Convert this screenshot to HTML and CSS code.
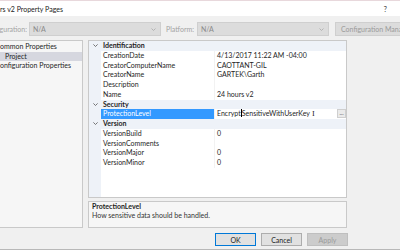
FILE: index.html
```html
<!DOCTYPE html>
<html lang="en">
<head>
  <meta charset="UTF-8">
  <title>Property Pages</title>
  <link rel="stylesheet" href="styles.css">
</head>
<body>
  <div class="window">
    <div class="titlebar">
      <span class="title">rs v2 Property Pages</span>
      <span class="help">?</span>
    </div>

    <div class="config-row">
      <span class="cfg-label"><span>iguration:</span></span>
      <div class="combo">
        <span>N/A</span>
        <svg class="arrow" width="5" height="3" viewBox="0 0 5 3"><polyline points="0.5,0.5 2.5,2.5 4.5,0.5" fill="none" stroke="#a8a8a8" stroke-width="0.8"/></svg>
      </div>
      <span class="cfg-label platform"><span>Platform:</span></span>
      <div class="combo">
        <span>N/A</span>
        <svg class="arrow" width="5" height="3" viewBox="0 0 5 3"><polyline points="0.5,0.5 2.5,2.5 4.5,0.5" fill="none" stroke="#a8a8a8" stroke-width="0.8"/></svg>
      </div>
      <button class="cfg-button">Configuration Manag</button>
    </div>

    <div class="main">
      <div class="tree">
        <div class="tree-item">ommon Properties</div>
        <div class="tree-item selected child">Project</div>
        <div class="tree-item">onfiguration Properties</div>
      </div>

      <div class="right">
        <div class="grid">
          <div class="row category">
            <span class="chev"><svg width="5" height="3" viewBox="0 0 5 3"><polyline points="0.4,0.4 2.5,2.5 4.6,0.4" fill="none" stroke="#555" stroke-width="0.8"/></svg></span>
            <span class="name">Identification</span>
            <span class="value"></span>
          </div>
          <div class="row"><span class="chev"></span><span class="name">CreationDate</span><span class="value">4/13/2017 11:22 AM -04:00</span></div>
          <div class="row"><span class="chev"></span><span class="name">CreatorComputerName</span><span class="value">CAOTTANT-GIL</span></div>
          <div class="row"><span class="chev"></span><span class="name">CreatorName</span><span class="value">GARTEK\Garth</span></div>
          <div class="row"><span class="chev"></span><span class="name">Description</span><span class="value"></span></div>
          <div class="row"><span class="chev"></span><span class="name">Name</span><span class="value">24 hours v2</span></div>
          <div class="row category">
            <span class="chev"><svg width="5" height="3" viewBox="0 0 5 3"><polyline points="0.4,0.4 2.5,2.5 4.6,0.4" fill="none" stroke="#555" stroke-width="0.8"/></svg></span>
            <span class="name">Security</span>
            <span class="value"></span>
          </div>
          <div class="row active">
            <span class="chev"></span>
            <span class="name">ProtectionLevel</span>
            <span class="value">
              <span class="value-text">Encrypt<span class="caret"></span>SensitiveWithUserKey</span>
              <span class="ibeam">I</span>
              <span class="dots">...</span>
            </span>
          </div>
          <div class="row category">
            <span class="chev"><svg width="5" height="3" viewBox="0 0 5 3"><polyline points="0.4,0.4 2.5,2.5 4.6,0.4" fill="none" stroke="#555" stroke-width="0.8"/></svg></span>
            <span class="name">Version</span>
            <span class="value"></span>
          </div>
          <div class="row"><span class="chev"></span><span class="name">VersionBuild</span><span class="value">0</span></div>
          <div class="row"><span class="chev"></span><span class="name">VersionComments</span><span class="value"></span></div>
          <div class="row"><span class="chev"></span><span class="name">VersionMajor</span><span class="value">0</span></div>
          <div class="row"><span class="chev"></span><span class="name">VersionMinor</span><span class="value">0</span></div>
        </div>

        <div class="desc">
          <div class="desc-title">ProtectionLevel</div>
          <div class="desc-text">How sensitive data should be handled.</div>
        </div>
      </div>
    </div>

    <div class="buttons">
      <button class="btn default">OK</button>
      <button class="btn">Cancel</button>
      <button class="btn disabled">Apply</button>
    </div>
  </div>
</body>
</html>
```

FILE: styles.css
```css
:root {
  --window-bg: #f0f0f0;
  --panel-bg: #f6f6f6;
  --border: #c9c9c9;
  --margin-bg: #eef2f8;
  --select-blue: #3399ff;
  --text: #1e1e1e;
}

body {
  margin: 0;
  font-family: Lato, "Noto Sans", sans-serif;
  font-size: 7px;
  color: var(--text);
  background: var(--window-bg);
}

.window {
  width: 400px;
  height: 250px;
  overflow: hidden;
  background: var(--window-bg);
  border-top: 1px solid #e8d8dc;
  border-bottom: 1px solid #b8b8b8;
  box-sizing: border-box;
}

.titlebar {
  height: 15px;
  background: #fff;
  display: flex;
  justify-content: space-between;
  align-items: center;
  padding-right: 13px;
}

.title {
  color: #222;
}

.help {
  color: #333;
}

.config-row {
  display: flex;
  align-items: center;
  height: 14px;
  margin-top: 6px;
  white-space: nowrap;
}

.cfg-label {
  width: 27px;
  margin-right: 2px;
  flex-shrink: 0;
  display: flex;
  justify-content: flex-end;
  overflow: hidden;
  color: #a3a3a3;
}

.cfg-label.platform {
  width: 29px;
  margin-left: 5px;
  justify-content: flex-start;
}

.combo {
  width: 132px;
  height: 14px;
  flex-shrink: 0;
  box-sizing: border-box;
  background: #dcdcdc;
  border: 1px solid #cfcfcf;
  display: flex;
  justify-content: space-between;
  align-items: center;
  padding: 0 4px 0 3px;
  color: #8a8a8a;
}

.cfg-button {
  margin-left: 6px;
  width: 70px;
  height: 14px;
  flex-shrink: 0;
  padding: 0 0 0 5px;
  text-align: left;
  font-family: inherit;
  font-size: 7px;
  color: #9a9a9a;
  background: #dcdcdc;
  border: 1px solid #cfcfcf;
  white-space: nowrap;
  overflow: hidden;
}

.main {
  display: flex;
  gap: 5px;
  margin-top: 4px;
  height: 188px;
}

.tree {
  width: 83px;
  box-sizing: border-box;
  background: var(--panel-bg);
  border: 1px solid var(--border);
  border-left: none;
  padding-top: 1px;
  white-space: nowrap;
  overflow: hidden;
}

.tree-item {
  height: 9.5px;
  line-height: 9.5px;
}

.tree-item.child {
  padding-left: 5px;
}

.tree-item.selected {
  background: #d6d7df;
}

.right {
  width: 259px;
  display: flex;
  flex-direction: column;
  gap: 3px;
}

.grid {
  height: 158px;
  box-sizing: border-box;
  border: 1px solid var(--border);
  background: linear-gradient(to right, var(--margin-bg) 12px, #fff 12px);
}

.row {
  display: grid;
  grid-template-columns: 12px 113px 1fr;
  height: 9.75px;
  line-height: 9.75px;
  white-space: nowrap;
}

.row.category {
  background: var(--margin-bg);
  font-weight: bold;
}

.chev {
  display: flex;
  align-items: center;
  justify-content: center;
  padding-left: 1px;
}

.name {
  padding-left: 2px;
  overflow: hidden;
}

.value {
  padding-left: 2px;
  border-left: 1px solid #f2f2f2;
  overflow: hidden;
}

.row.category .value {
  border-left: none;
}

.row.active .name {
  background: var(--select-blue);
  color: #fff;
}

.row.active .value {
  position: relative;
  display: flex;
  align-items: center;
}

.caret {
  display: inline-block;
  width: 1px;
  height: 8px;
  background: #000;
  vertical-align: -1px;
}

.ibeam {
  margin-left: 2px;
  margin-top: 2px;
  font-family: "DejaVu Serif", serif;
  font-size: 7px;
  color: #111;
}

.dots {
  position: absolute;
  right: 0;
  top: 0;
  width: 9px;
  height: 9px;
  box-sizing: border-box;
  border: 1px solid #cfcfcf;
  background: #eaeaea;
  font-size: 6px;
  line-height: 5px;
  text-align: center;
  color: #444;
}

.desc {
  flex: 1;
  box-sizing: border-box;
  border: 1px solid var(--border);
  background: var(--panel-bg);
  padding: 0 3px;
}

.desc-title {
  font-weight: bold;
  line-height: 9px;
}

.desc-text {
  line-height: 9px;
  color: #333;
}

.buttons {
  display: flex;
  gap: 5px;
  margin-top: 5px;
  padding-left: 215px;
}

.btn {
  width: 41px;
  height: 13px;
  padding: 0;
  font-family: inherit;
  font-size: 7px;
  color: #222;
  background: #e1e1e1;
  border: 1px solid #adadad;
}

.btn.default {
  border-color: #0078d7;
}

.btn.disabled {
  background: #cccccc;
  border-color: #bfbfbf;
  color: #9a9a9a;
}
```
